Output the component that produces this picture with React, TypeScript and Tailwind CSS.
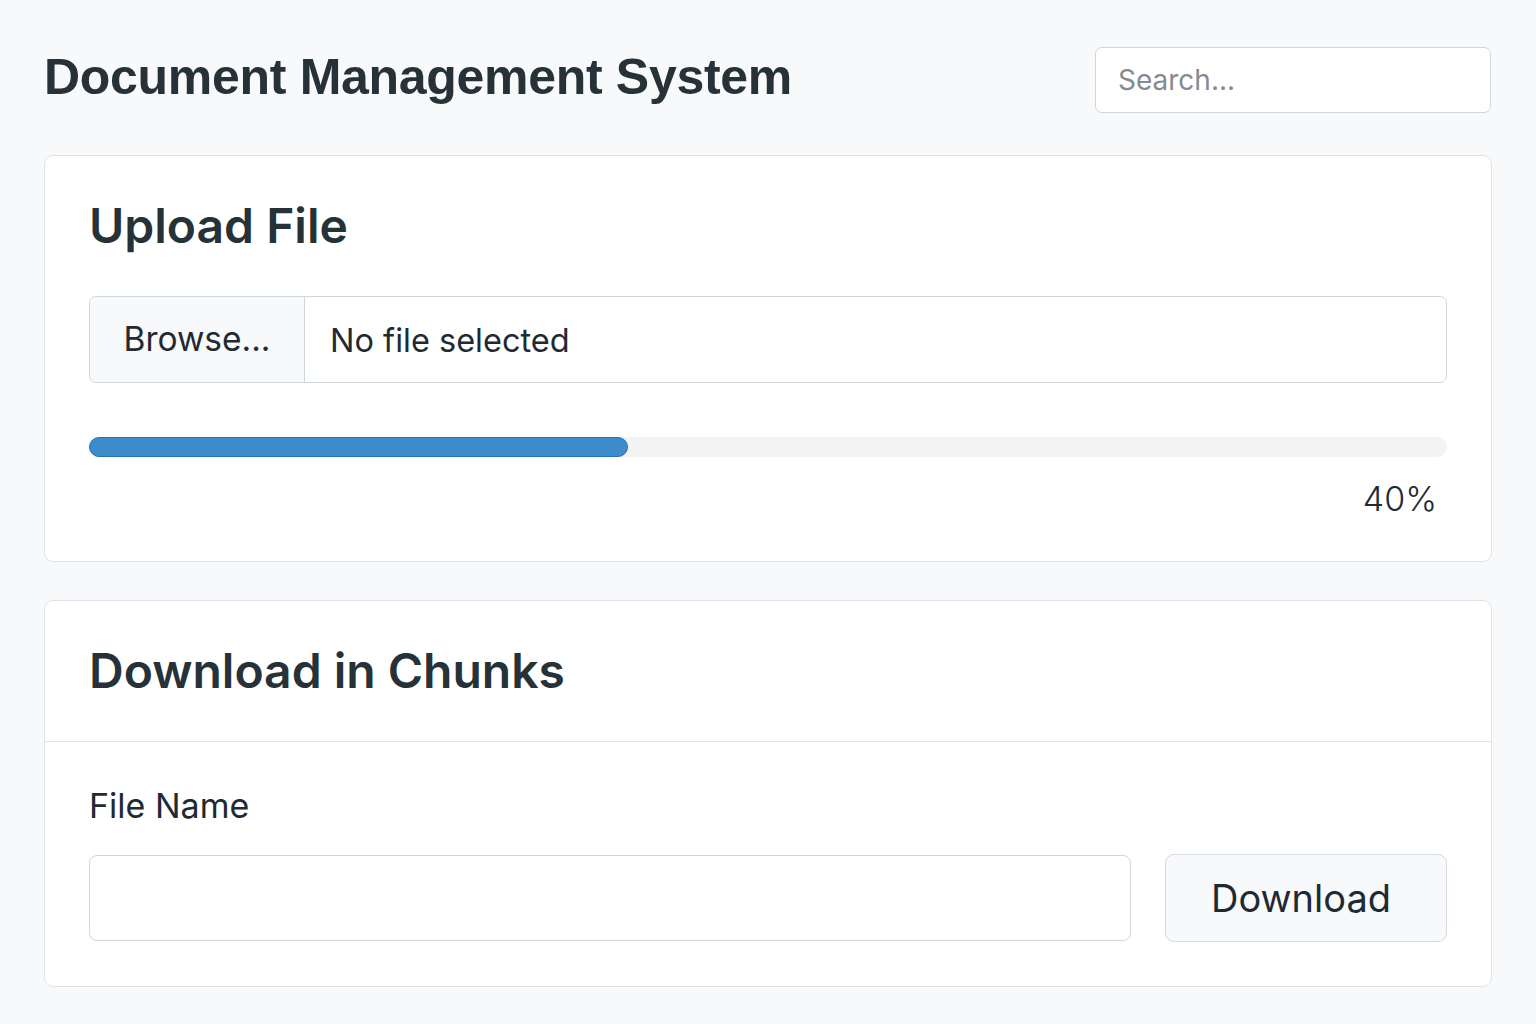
import React from "react";

export default function App() {
  const progress = 39.7;
  return (
    <div className="min-h-screen w-full bg-[#f8f9fa] font-['Inter',sans-serif] text-[#212b36]">
      <div className="px-[44px] pt-[47px]">
        <header className="flex items-center justify-between">
          <h1 className="-mt-[6px] font-['Liberation_Sans',Arial,sans-serif] text-[50px] font-bold leading-none tracking-[-0.3px] text-[#263238]">
            Document Management System
          </h1>
          <input
            type="text"
            placeholder="Search..."
            className="mr-[1px] h-[66px] w-[396px] rounded-[7px] border border-[#cfd6dc] bg-white px-[22px] text-[28px] text-[#263238] placeholder:text-[#858b90] outline-none"
          />
        </header>

        <section className="mt-[42px] rounded-[9px] border border-[#dfe3e7] bg-white px-[44px] pt-[42px] pb-[40px]">
          <h2 className="text-[48px] font-semibold leading-[56px] text-[#263238]">Upload File</h2>
          <div className="mt-[42px] flex h-[87px] overflow-hidden rounded-[7px] border border-[#cfd6dc]">
            <div className="flex w-[215px] items-center justify-center border-r border-[#cfd6dc] bg-[#f8f9fa] text-[33.5px] text-[#1f2a33]">
              Browse...
            </div>
            <div className="flex flex-1 items-center pl-[25px] pt-[4px] text-[32.5px] text-[#1f2a33]">No file selected</div>
          </div>
          <div className="mt-[54px] h-[20px] w-full rounded-full bg-[#f1f3f5]">
            <div
              className="h-full rounded-full border border-[#1f74bf] bg-[#3d8bcb]"
              style={{ width: `${progress}%` }}
            />
          </div>
          <div className="mt-[20px] pr-[10px] text-right text-[34px] font-light leading-[44px] text-[#1f2a33]">40%</div>
        </section>

        <section className="mt-[38px] rounded-[9px] border border-[#dfe3e7] bg-white">
          <div className="border-b border-[#dfe3e7] px-[44px] pt-[42px] pb-[42px]">
            <h2 className="text-[48px] font-semibold leading-[56px] text-[#263238]">Download in Chunks</h2>
          </div>
          <div className="px-[44px] pt-[42px] pb-[44px]">
            <label className="block text-[34px] leading-[44px] text-[#1f2a33]">File Name</label>
            <div className="mt-[26px] flex items-center gap-[34px]">
              <input
                type="text"
                className="h-[86px] flex-1 rounded-[8px] border border-[#cfd6dc] bg-white px-[20px] text-[32px] outline-none"
              />
              <button className="h-[88px] w-[282px] rounded-[9px] border border-[#d3d9de] bg-[#f8f9fa] pr-[10px] text-[38px] text-[#1f2a33]">
                Download
              </button>
            </div>
          </div>
        </section>
      </div>
    </div>
  );
}
